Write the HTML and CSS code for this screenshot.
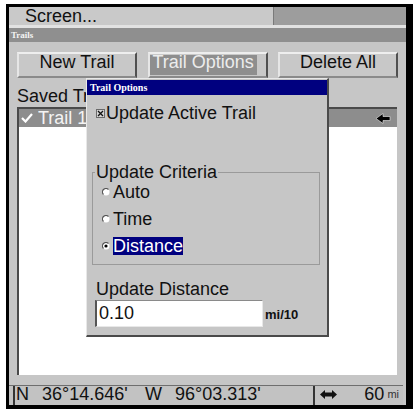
FILE: index.html
```html
<!DOCTYPE html>
<html lang="en">
<head>
    <meta charset="UTF-8">
    <meta name="viewport" content="width=device-width, initial-scale=1.0">
    <title>Trails</title>
    <link rel="stylesheet" href="styles.css">
</head>
<body>
    <div class="screen">
        <div class="menu-bar">
            <div class="menu-item">Screen...</div>
            <div class="menu-fill"></div>
        </div>
        <div class="title-bar">Trails</div>

        <div class="panel">
            <div class="btn-row">
                <div class="btn">New Trail</div>
                <div class="btn active"><span class="btn-hl">Trail Options</span></div>
                <div class="btn">Delete All</div>
            </div>
            <div class="label">Saved Trails</div>
            <div class="list">
                <div class="list-row selected">
                    <svg class="row-check" width="12" height="10" viewBox="0 0 12 10">
                        <polyline points="1,5 4.5,8.5 11,1" fill="none" stroke="#fff" stroke-width="2.2"/>
                    </svg>
                    <span class="row-name">Trail 1</span>
                    <svg class="row-arrow" width="16" height="11" viewBox="0 0 16 11">
                        <polygon points="1,5.5 8,0.5 8,3.5 15,3.5 15,7.5 8,7.5 8,10.5" fill="#000" stroke="#eee" stroke-width="0.6"/>
                    </svg>
                </div>
            </div>
        </div>

        <div class="status">
            <span class="st-cell st-ns">N</span>
            <span class="st-lat">36°14.646'</span>
            <span class="st-ew">W</span>
            <span class="st-lon">96°03.313'</span>
            <span class="st-cell st-scale">
                <svg class="st-arrow" width="17" height="9" viewBox="0 0 17 9">
                    <polygon points="0,4.5 5,0 5,2.5 12,2.5 12,0 17,4.5 12,9 12,6.5 5,6.5 5,9" fill="#111"/>
                </svg>
                <span class="st-range">60</span><span class="st-unit">mi</span>
            </span>
        </div>

        <div class="dialog">
            <div class="dlg-title">Trail Options</div>
            <div class="dlg-body">
                <div class="check-row">
                    <svg class="checkbox" width="9" height="9" viewBox="0 0 9 9">
                        <rect x="0.5" y="0.5" width="8" height="8" fill="#d4d4d4" stroke="#6a6a6a"/>
                        <path d="M2 2 L7 7 M7 2 L2 7" stroke="#111" stroke-width="1.3"/>
                    </svg>
                    <span>Update Active Trail</span>
                </div>

                <fieldset class="group">
                    <legend>Update Criteria</legend>
                    <div class="radio-list">
                        <div class="radio-row">
                            <svg class="radio" width="8" height="8" viewBox="0 0 8 8">
                                <circle cx="4" cy="4" r="3.5" fill="#fff"/>
                                <path d="M6.5 1.5 A3.5 3.5 0 0 0 1.5 6.5" fill="none" stroke="#555" stroke-width="1.2"/>
                            </svg>
                            <span>Auto</span>
                        </div>
                        <div class="radio-row">
                            <svg class="radio" width="8" height="8" viewBox="0 0 8 8">
                                <circle cx="4" cy="4" r="3.5" fill="#fff"/>
                                <path d="M6.5 1.5 A3.5 3.5 0 0 0 1.5 6.5" fill="none" stroke="#555" stroke-width="1.2"/>
                            </svg>
                            <span>Time</span>
                        </div>
                        <div class="radio-row">
                            <svg class="radio" width="8" height="8" viewBox="0 0 8 8">
                                <circle cx="4" cy="4" r="3.5" fill="#fff"/>
                                <path d="M6.5 1.5 A3.5 3.5 0 0 0 1.5 6.5" fill="none" stroke="#555" stroke-width="1.2"/>
                                <circle cx="4" cy="4" r="1.6" fill="#000"/>
                            </svg>
                            <span class="radio-hl">Distance</span>
                        </div>
                    </div>
                </fieldset>

                <div class="field-label">Update Distance</div>
                <div class="field-row">
                    <div class="field">0.10</div>
                    <span class="field-unit">mi/10</span>
                </div>
            </div>
        </div>
    </div>
</body>
</html>
```

FILE: styles.css
```css
body {
    margin: 0;
    background: #fff;
    font-family: "Liberation Sans", Arial, sans-serif;
    font-size: 18px;
    color: #111;
}
.screen {
    position: relative;
    box-sizing: border-box;
    width: 407px;
    height: 405px;
    margin: 4px 0 0 6px;
    border: 3px solid #000;
    border-right-width: 7px;
    border-bottom-width: 4px;
    background: #c6c6c6;
    display: flex;
    flex-direction: column;
}
.menu-bar {
    display: flex;
    height: 18px;
    border-bottom: 3px solid #e2e2e2;
}
.menu-item {
    width: 248px;
    padding-left: 16px;
    background: #c9c9c9;
    line-height: 18px;
}
.menu-fill {
    flex: 1;
    background: #9d9d9d;
    border-left: 1px solid #7a7a7a;
}
.title-bar {
    height: 14px;
    line-height: 14px;
    padding-left: 2px;
    background: #8f8f8f;
    color: #f4f4f4;
    font-family: "Liberation Serif", serif;
    font-weight: bold;
    font-size: 9px;
}
.panel {
    flex: 1;
    display: flex;
    flex-direction: column;
    padding: 10px 8px 0 8px;
}
.btn-row {
    display: flex;
    justify-content: space-between;
}
.btn {
    box-sizing: border-box;
    width: 120px;
    height: 26px;
    background: #c8c8c8;
    border: 2px solid;
    border-color: #eeeeee #505050 #8a8a8a #e6e6e6;
    text-align: center;
    line-height: 16px;
}
.btn.active {
    text-align: left;
}
.btn-hl {
    display: inline-block;
    margin-top: 1px;
    height: 20px;
    line-height: 14px;
    padding: 0 3px;
    background: #8e8e8e;
    color: #ececec;
}
/* label and row text run under the dialog, so clip them at its edge */
.label {
    width: 69px;
    margin-top: 9px;
    line-height: 18px;
    white-space: nowrap;
    overflow: hidden;
}
.list {
    flex: 1;
    margin-top: 2px;
    margin-right: 1px;
    background: #fff;
    border-top: 2px solid #4a4a4a;
    border-left: 2px solid #4a4a4a;
}
.list-row {
    display: flex;
    align-items: center;
    height: 18px;
    padding: 0 6px 0 2px;
    line-height: 18px;
}
.list-row.selected {
    background: #8d8d8d;
    color: #f4f4f4;
}
.row-check {
    margin-right: 5px;
}
.row-name {
    width: 49px;
    white-space: nowrap;
    overflow: hidden;
}
.row-arrow {
    margin-left: auto;
}
.status {
    display: flex;
    height: 19px;
    margin: 10px 3px 0 0;
    padding-left: 4px;
    border-top: 1px solid #6e6e6e;
    background: #c2c2c2;
    line-height: 16px;
}
.st-cell {
    border-left: 2px solid #333;
}
.st-ns {
    width: 26px;
    padding-left: 1px;
}
.st-lat {
    width: 103px;
}
.st-ew {
    width: 30px;
}
.st-lon {
    width: 138px;
}
.st-scale {
    flex: 1;
    display: flex;
    padding: 0 4px 0 5px;
}
.st-arrow {
    margin-top: 4px;
}
.st-range {
    margin-left: auto;
}
.st-unit {
    margin-left: 3px;
    font-size: 11px;
    color: #333;
}
.dialog {
    position: absolute;
    left: 77px;
    top: 71px;
    box-sizing: border-box;
    width: 243px;
    height: 259px;
    background: #c6c6c6;
    border: 1px solid;
    border-color: #e8e8e8 #4a4a4a #4a4a4a #e8e8e8;
    border-right-width: 2px;
    border-bottom-width: 2px;
}
.dlg-title {
    margin-top: 1px;
    height: 15px;
    line-height: 15px;
    padding-left: 3px;
    background: #00007f;
    color: #fff;
    font-family: "Liberation Serif", serif;
    font-weight: bold;
    font-size: 10px;
}
.dlg-body {
    padding: 0 9px;
}
.check-row {
    display: flex;
    align-items: center;
    margin-top: 9px;
    line-height: 18px;
}
.checkbox {
    margin-right: 1px;
}
.group {
    width: 228px;
    box-sizing: border-box;
    margin: 41px 0 0 -4px;
    padding: 2px 0 9px 2px;
    border: 1px solid #9a9a9a;
    min-inline-size: 0;
}
.group legend {
    padding: 0 1px;
    line-height: 18px;
}
.radio-list {
    display: flex;
    flex-direction: column;
    gap: 9px;
    margin-left: 7px;
}
.radio-row {
    display: flex;
    align-items: center;
    height: 18px;
    line-height: 18px;
}
.radio {
    margin-right: 3px;
}
.radio-hl {
    background: #00007f;
    color: #fff;
}
.field-label {
    margin-top: 15px;
    line-height: 18px;
}
.field-row {
    display: flex;
    align-items: baseline;
    margin-top: 2px;
    margin-left: -1px;
}
.field {
    box-sizing: border-box;
    width: 168px;
    height: 27px;
    padding: 2px 0 0 2px;
    line-height: 20px;
    background: #fff;
    border-left: 2px solid #555;
    border-top: 1px solid #8a8a8a;
    border-right: 1px solid #e8e8e8;
    border-bottom: 1px solid #e8e8e8;
}
.field-unit {
    margin-left: 2px;
    font-size: 13px;
    font-weight: bold;
}
```
